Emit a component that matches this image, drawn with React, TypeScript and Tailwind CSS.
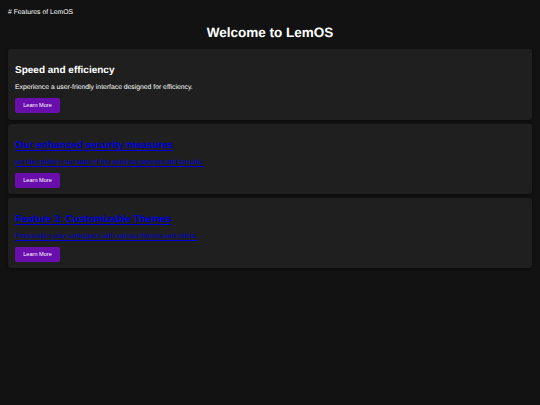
const FEATURES = [
  { title: 'Speed and efficiency', text: 'Experience a user-friendly interface designed for efficiency.', link: false },
  { title: 'Our enhanced security measures', text: 'we take pride in our state of the antivirus partners and security.', link: true },
  { title: 'Feature 3: Customizable Themes', text: 'Personalize your workspace with various themes and colors.', link: true },
];

function FeatureCard({ title, text, link }: { title: string; text: string; link: boolean }) {
  const color = link ? 'text-[#0000dd] underline decoration-1 underline-offset-2' : 'text-white';
  return (
    <div className="h-[70px] rounded-[3px] bg-[#1f1f1f] px-[7px] pt-[15px] shadow-[0_1px_3px_rgba(0,0,0,0.4)] first:h-[71px]">
      <h2 className={`text-[10px] leading-[13px] font-bold ${color}`}>{title}</h2>
      <p className={`mt-[7px] text-[6.8px] leading-[8px] ${color}`}>{text}</p>
      <button className="mt-[6px] flex h-[15px] w-[45px] items-center justify-center rounded-[2px] bg-[#6a0dad] text-[5.6px] text-white">
        Learn More
      </button>
    </div>
  );
}

export default function App() {
  return (
    <div className="min-h-[405px] bg-[#121212] px-[8px] pt-[8px] font-['Liberation_Sans',Arial,sans-serif] text-white [text-rendering:geometricPrecision]">
      <p className="pt-px text-[6.8px] leading-[8px]">
        # Features of LemOS
      </p>
      <h1 className="mt-[7px] text-center text-[13.5px] leading-[17px] font-bold">Welcome to LemOS</h1>
      <div className="mt-[8px] flex flex-col gap-[4px]">
        {FEATURES.map(f => <FeatureCard key={f.title} {...f} />)}
      </div>
    </div>
  );
}
